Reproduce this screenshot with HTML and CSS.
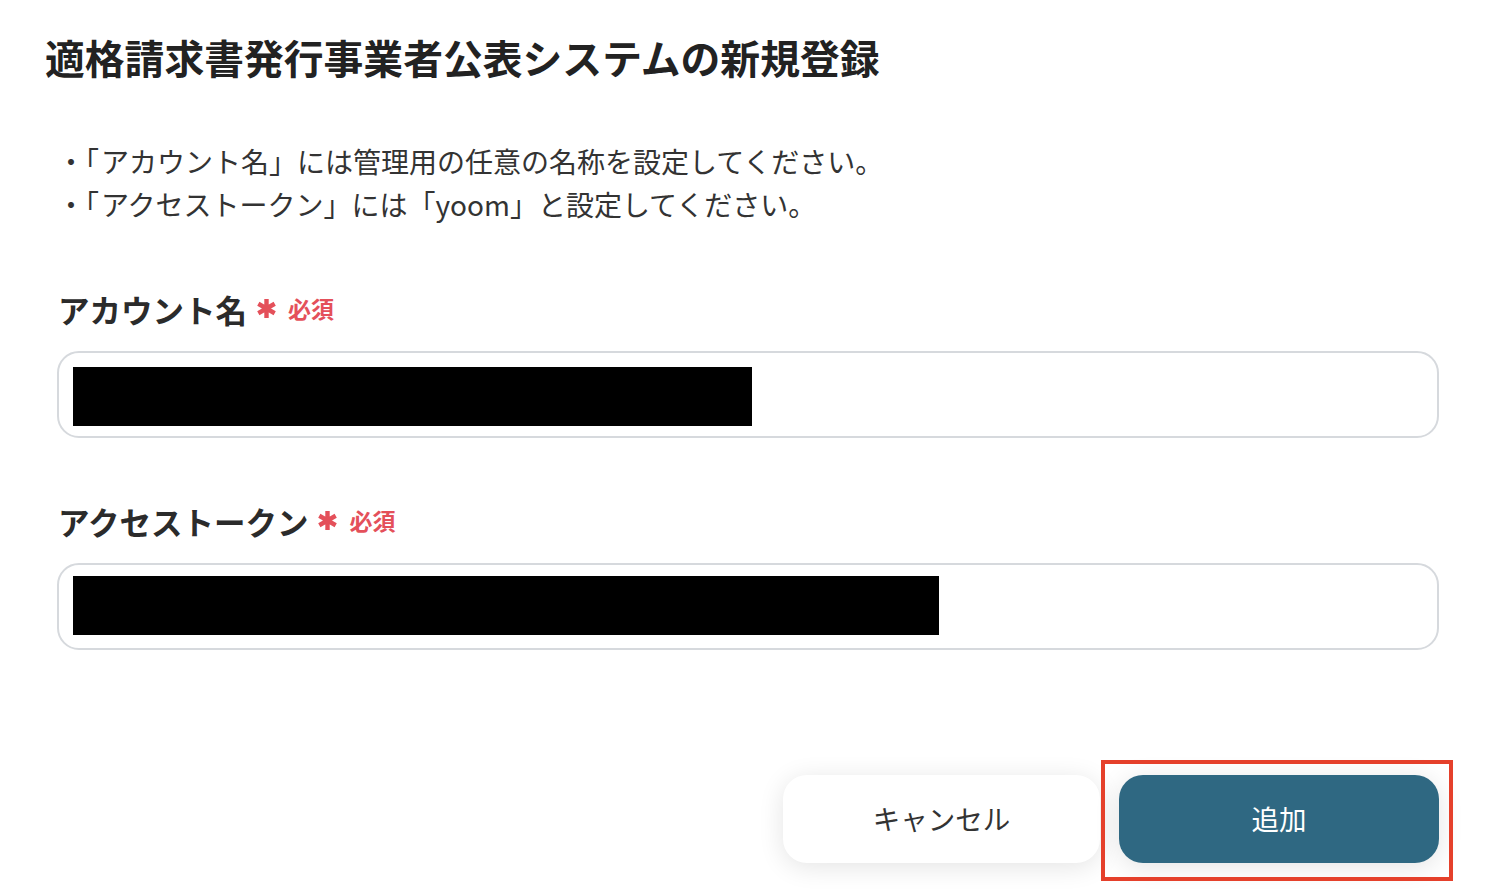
FILE: index.html
```html
<!DOCTYPE html>
<html lang="ja">
<head>
<meta charset="utf-8">
<title>適格請求書発行事業者公表システムの新規登録</title>
<link rel="stylesheet" href="styles.css">
</head>
<body>
<div class="page">
  <h1 class="title">適格請求書発行事業者公表システムの新規登録</h1>
  <div class="notes">
    <p><span class="lead">・「</span>アカウント名」には管理用の任意の名称を設定してください。</p>
    <p><span class="lead">・「</span>アクセストークン」には「yoom」と設定してください。</p>
  </div>
  <div class="field">
    <div class="label"><span class="label-text">アカウント名</span><svg class="req-mark" viewBox="0 0 20 20" aria-hidden="true"><path d="M10 1V19M2.2 5.5L17.8 14.5M2.2 14.5L17.8 5.5"/></svg><span class="req-text">必須</span></div>
    <div class="input"><div class="redact redact-1"></div></div>
  </div>
  <div class="field">
    <div class="label"><span class="label-text">アクセストークン</span><svg class="req-mark" viewBox="0 0 20 20" aria-hidden="true"><path d="M10 1V19M2.2 5.5L17.8 14.5M2.2 14.5L17.8 5.5"/></svg><span class="req-text">必須</span></div>
    <div class="input"><div class="redact redact-2"></div></div>
  </div>
  <div class="actions">
    <button class="btn btn-cancel">キャンセル</button>
    <button class="btn btn-add">追加</button>
  </div>
</div>
</body>
</html>
```
FILE: styles.css
```css
html, body {
  margin: 0;
  padding: 0;
  background: #ffffff;
}
body {
  font-family: "Noto Sans CJK JP", "Noto Sans", sans-serif;
  color: #333333;
  text-spacing-trim: space-all;
}
.page {
  padding: 33px 63px 40px 57px;
}
.title {
  margin: 0 0 0 -12px;
  font-size: 39.8px;
  line-height: 48px;
  font-weight: 700;
  color: #222222;
}
.notes {
  margin-top: 59px;
}
.notes p {
  margin: 0;
  font-size: 28px;
  line-height: 43px;
  color: #333333;
}
.lead {
  text-spacing-trim: normal;
  margin-right: 2px;
}
.field {
  margin-top: 61px;
}
.label {
  display: flex;
  align-items: center;
  height: 44px;
  padding-left: 1px;
}
.label-text {
  font-size: 31.5px;
  font-weight: 700;
  color: #2b2b2b;
}
.req-mark {
  width: 21px;
  height: 21px;
  margin-left: 9px;
  margin-bottom: 2px;
  fill: none;
  stroke: #e4505a;
  stroke-width: 4.2;
}
.req-text {
  margin-left: 11px;
  font-size: 23px;
  font-weight: 700;
  color: #e4505a;
  margin-bottom: 2px;
}
.input {
  margin-top: 20px;
  border: 2px solid #d6d9dd;
  border-radius: 22px;
  padding: 14px;
  height: 55px;
}
.redact {
  height: 59px;
  background: #000000;
}
.redact-1 { width: 679px; }
.redact-2 { width: 866px; margin-top: -3px; }
.actions {
  margin-top: 125px;
  display: flex;
  justify-content: flex-end;
  gap: 19px;
}
.btn {
  height: 88px;
  padding: 0 0 3px;
  border: none;
  border-radius: 24px;
  font-family: "Noto Sans CJK JP", "Noto Sans", sans-serif;
  font-size: 27.5px;
  box-shadow: 0 4px 26px rgba(0, 0, 0, 0.11);
  cursor: pointer;
}
.btn-cancel {
  width: 317px;
  background: #ffffff;
  color: #333333;
}
.btn-add {
  position: relative;
  width: 320px;
  background: #2f6882;
  color: #ffffff;
}
.btn-add::after {
  content: "";
  position: absolute;
  left: -18px;
  top: -15px;
  right: -14px;
  bottom: -18px;
  border: 4px solid #e5402b;
  pointer-events: none;
}
```
